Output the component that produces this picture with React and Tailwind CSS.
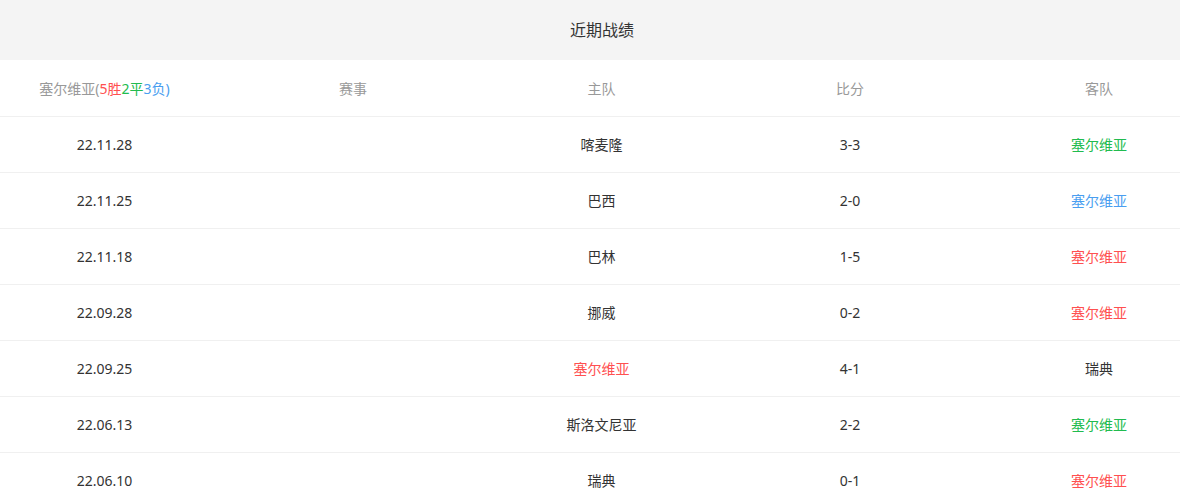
import React from "react";

const RED = "text-[#ff5050]";
const GREEN = "text-[#22bb4f]";
const BLUE = "text-[#4a9ef0]";
const DARK = "text-[#333333]";

const rows = [
  { date: "22.11.28", home: "喀麦隆", homeC: DARK, score: "3-3", away: "塞尔维亚", awayC: GREEN },
  { date: "22.11.25", home: "巴西", homeC: DARK, score: "2-0", away: "塞尔维亚", awayC: BLUE },
  { date: "22.11.18", home: "巴林", homeC: DARK, score: "1-5", away: "塞尔维亚", awayC: RED },
  { date: "22.09.28", home: "挪威", homeC: DARK, score: "0-2", away: "塞尔维亚", awayC: RED },
  { date: "22.09.25", home: "塞尔维亚", homeC: RED, score: "4-1", away: "瑞典", awayC: DARK },
  { date: "22.06.13", home: "斯洛文尼亚", homeC: DARK, score: "2-2", away: "塞尔维亚", awayC: GREEN },
  { date: "22.06.10", home: "瑞典", homeC: DARK, score: "0-1", away: "塞尔维亚", awayC: RED },
];

const grid = "grid grid-cols-[209px_288px_209px_288px_1fr] items-center text-center";

export default function App() {
  return (
    <div
      className="w-[1180px] bg-white text-[14px] overflow-hidden"
      style={{ fontFamily: '"Noto Sans", "Noto Sans CJK SC", sans-serif' }}
    >
      <div className="h-[60px] bg-[#f4f4f4] flex items-center justify-center pl-[24px] text-[16px] text-[#333333]">
        近期战绩
      </div>
      <div className={`${grid} h-[57px] border-b border-[#f0f0f0] text-[#999999]`}>
        <div>
          塞尔维亚(<span className={RED}>5胜</span>
          <span className={GREEN}>2平</span>
          <span className={BLUE}>3负)</span>
        </div>
        <div>赛事</div>
        <div>主队</div>
        <div>比分</div>
        <div className="pl-[24px]">客队</div>
      </div>
      {rows.map((r, i) => (
        <div key={i} className={`${grid} h-[56px] border-b border-[#f0f0f0]`}>
          <div className={DARK}>{r.date}</div>
          <div></div>
          <div className={r.homeC}>{r.home}</div>
          <div className={DARK}>{r.score}</div>
          <div className={`pl-[24px] ${r.awayC}`}>{r.away}</div>
        </div>
      ))}
    </div>
  );
}
